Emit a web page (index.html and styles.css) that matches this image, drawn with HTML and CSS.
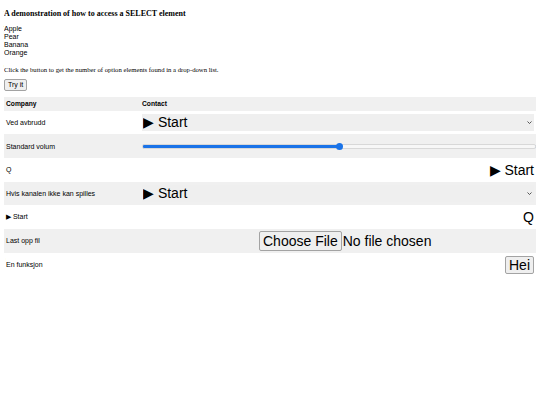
FILE: index.html
```html
<!DOCTYPE html>
<html lang="en">
<head>
  <meta charset="UTF-8" />
  <title>SELECT demo</title>
  <link rel="stylesheet" href="styles.css">
</head>
<body>
  <h4 class="title">A demonstration of how to access a SELECT element</h4>

  <div class="fruits">
    <div>Apple</div>
    <div>Pear</div>
    <div>Banana</div>
    <div>Orange</div>
  </div>

  <p class="hint">Click the button to get the number of option elements found in a drop-down list.</p>

  <button class="try">Try it</button>

  <table class="grid">
    <tr><th class="first">Company</th><th>Contact</th></tr>
    <tr>
      <td>Ved avbrudd</td>
      <td><select class="pick"><option>▶ Start</option></select></td>
    </tr>
    <tr>
      <td>Standard volum</td>
      <td><input type="range" class="volume" min="0" max="100" value="50"></td>
    </tr>
    <tr>
      <td>Q</td>
      <td class="right big">▶ Start</td>
    </tr>
    <tr>
      <td>Hvis kanalen ikke kan spilles</td>
      <td><select class="pick"><option>▶ Start</option></select></td>
    </tr>
    <tr>
      <td>▶ Start</td>
      <td class="right big">Q</td>
    </tr>
    <tr>
      <td>Last opp fil</td>
      <td><span class="file"><button class="ctl-btn">Choose File</button><span class="file-name">No file chosen</span></span></td>
    </tr>
    <tr>
      <td>En funksjon</td>
      <td class="right"><button class="ctl-btn hei">Hei</button></td>
    </tr>
  </table>
</body>
</html>
```

FILE: styles.css
```css
body {
  margin: 4px;
  font-family: "Liberation Sans", Arial, sans-serif;
  color: #000;
  background: #fff;
}
.title {
  font-family: "Liberation Serif", "Times New Roman", serif;
  font-size: 8px;
  line-height: 9px;
  margin: 5px 0 0;
}
.fruits {
  margin-top: 7px;
  font-size: 7px;
  line-height: 7.9px;
}
.hint {
  font-family: "Liberation Serif", "Times New Roman", serif;
  font-size: 6.7px;
  line-height: 7px;
  margin: 9px 0 0;
}
.try {
  display: block;
  margin-top: 6px;
  font-family: "Liberation Sans", Arial, sans-serif;
  font-size: 7px;
  line-height: 8px;
  padding: 1px 3px;
  background: #efefef;
  border: 1px solid #a3a3a3;
  border-radius: 2px;
  color: #000;
}
.grid {
  margin-top: 6px;
  width: 100%;
  border-collapse: collapse;
}
.grid tr:nth-child(odd) {
  background: #f0f0f0;
}
.grid th {
  text-align: left;
  font-size: 6.7px;
  font-weight: bold;
  height: 14px;
  padding: 0 2px;
}
.grid th.first {
  width: 132px;
}
.grid td {
  font-size: 7px;
  height: 23.7px;
  padding: 0 2px;
  vertical-align: middle;
}
.grid td.right {
  text-align: right;
}
.grid td.big {
  font-size: 14px;
}
.pick {
  -webkit-appearance: none;
  appearance: none;
  display: block;
  width: 100%;
  height: 17px;
  margin: 0;
  padding: 0 1px;
  border: none;
  border-radius: 0;
  font-family: "Liberation Sans", Arial, sans-serif;
  font-size: 14px;
  line-height: 17px;
  color: #000;
  background: #efefef url("data:image/svg+xml,%3Csvg xmlns='http://www.w3.org/2000/svg' width='5' height='3'%3E%3Cpath d='M0.5 0.5 L2.5 2.5 L4.5 0.5' fill='none' stroke='%23444' stroke-width='0.9'/%3E%3C/svg%3E") no-repeat right 2px center;
}
.volume {
  -webkit-appearance: none;
  appearance: none;
  display: block;
  width: 100%;
  height: 3px;
  margin: 0;
  border-radius: 2px;
  border: 0.5px solid #d8d8d8;
  background: linear-gradient(to right, #1a73e8 0 50.5%, #f7f7f7 50.5%);
}
.volume::-webkit-slider-thumb {
  -webkit-appearance: none;
  width: 7px;
  height: 7px;
  border-radius: 50%;
  background: #1a73e8;
  border: none;
}
.file {
  display: inline-flex;
  align-items: center;
  margin-left: 117px;
  font-size: 14px;
}
.ctl-btn {
  font-family: "Liberation Sans", Arial, sans-serif;
  font-size: 14px;
  line-height: 16px;
  padding: 1px 3px;
  background: #efefef;
  border: 1px solid #a3a3a3;
  border-radius: 2px;
  color: #000;
  margin: 0;
}
.file-name {
  margin-left: 1px;
}
.hei {
  padding: 0 3px;
}
```
